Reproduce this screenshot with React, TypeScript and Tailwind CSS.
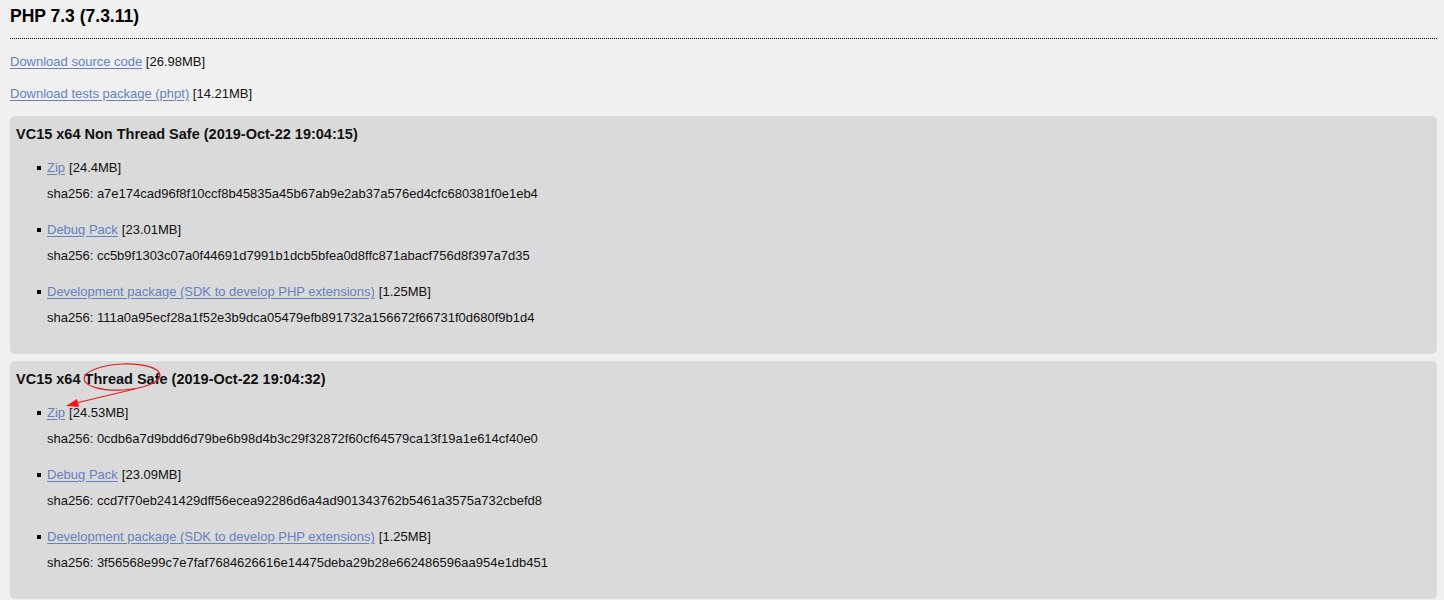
import React from 'react'

type Item = { label: string; size: string; sha: string }
type Build = { title: string; items: Item[]; note?: boolean }

const builds: Build[] = [
  {
    title: 'VC15 x64 Non Thread Safe (2019-Oct-22 19:04:15)',
    items: [
      { label: 'Zip', size: '[24.4MB]', sha: 'a7e174cad96f8f10ccf8b45835a45b67ab9e2ab37a576ed4cfc680381f0e1eb4' },
      { label: 'Debug Pack', size: '[23.01MB]', sha: 'cc5b9f1303c07a0f44691d7991b1dcb5bfea0d8ffc871abacf756d8f397a7d35' },
      { label: 'Development package (SDK to develop PHP extensions)', size: '[1.25MB]', sha: '111a0a95ecf28a1f52e3b9dca05479efb891732a156672f66731f0d680f9b1d4' },
    ],
  },
  {
    title: 'VC15 x64 Thread Safe (2019-Oct-22 19:04:32)',
    note: true,
    items: [
      { label: 'Zip', size: '[24.53MB]', sha: '0cdb6a7d9bdd6d79be6b98d4b3c29f32872f60cf64579ca13f19a1e614cf40e0' },
      { label: 'Debug Pack', size: '[23.09MB]', sha: 'ccd7f70eb241429dff56ecea92286d6a4ad901343762b5461a3575a732cbefd8' },
      { label: 'Development package (SDK to develop PHP extensions)', size: '[1.25MB]', sha: '3f56568e99c7e7faf7684626616e14475deba29b28e662486596aa954e1db451' },
    ],
  },
]

const font = "font-['Liberation_Sans',Tahoma,sans-serif]"

function Link({ children }: { children: React.ReactNode }) {
  return <a className="text-[#6680c0] underline underline-offset-2 cursor-pointer">{children}</a>
}

function BuildBox({ build }: { build: Build }) {
  return (
    <div className="relative bg-[#dadada] rounded-[5px] pt-[10px] pb-[28px] px-[6px]">
      <h4 className="text-[14.5px] font-bold leading-[17px] text-[#111]">{build.title}</h4>
      <ul className="mt-[17px] flex flex-col gap-[20px]">
        {build.items.map((it) => (
          <li key={it.label} className="flex flex-col gap-[10px]">
            <div className="flex items-center leading-[16px]">
              <span className="w-[4px] h-[4px] bg-black ml-[21px] mr-[6px] shrink-0" />
              <Link>{it.label}</Link>
              <span className="ml-[4px]">{it.size}</span>
            </div>
            <div className="ml-[31px] leading-[16px]">sha256: {it.sha}</div>
          </li>
        ))}
      </ul>
      {build.note && (
        <svg className="absolute left-0 top-0 pointer-events-none" width="200" height="60" viewBox="0 0 200 60">
          {/* hand-drawn note on the Thread Safe build */}
          <ellipse cx="112" cy="16" rx="38" ry="13" fill="none" stroke="#e02020" strokeWidth="1.2" transform="rotate(-3 112 16)" />
          <line x1="125" y1="28" x2="66" y2="42" stroke="#e02020" strokeWidth="1.2" />
          <polygon points="56,45 67,38 69,46" fill="#ff1010" />
        </svg>
      )}
    </div>
  )
}

export default function App() {
  return (
    <div className={`min-h-[600px] bg-[#f0f0f0] text-[13px] text-[#111] ${font} px-[10px] pt-[6px] pb-[2px]`}>
      <h3 className="text-[17.5px] font-bold leading-[21px] text-black">PHP 7.3 (7.3.11)</h3>
      <div className="mt-[11px] border-t border-dotted border-black mr-[-3px]" />
      <p className="mt-[15px] leading-[16px]">
        <Link>Download source code</Link> [26.98MB]
      </p>
      <p className="mt-[16px] leading-[16px]">
        <Link>Download tests package (phpt)</Link> [14.21MB]
      </p>
      <div className="mt-[14px] mr-[-3px] flex flex-col gap-[7px]">
        {builds.map((b) => (
          <BuildBox key={b.title} build={b} />
        ))}
      </div>
    </div>
  )
}
